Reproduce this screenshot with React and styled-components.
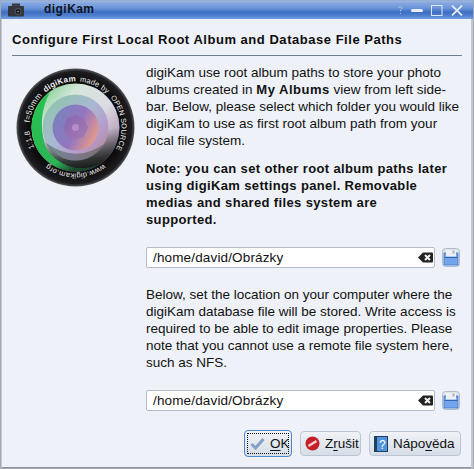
import React from "react";
import styled, { createGlobalStyle } from "styled-components";

const Global = createGlobalStyle`
  html, body { margin: 0; padding: 0; background: #eef1f7; }
  body { font-family: "Liberation Sans", Arial, sans-serif; }
`;

const Win = styled.div`
  width: 474px;
  height: 469px;
  box-sizing: border-box;
  display: flex;
  flex-direction: column;
  background: #eef1f7;
  border: solid #a4a9b1;
  border-width: 0 1px 1px 1px;
  box-shadow: inset 1px 0 0 #c4c8cf, inset -2px 0 0 #c4c8cf, inset 0 -1px 0 #8f949c;
  overflow: hidden;
`;

const TitleBar = styled.div`
  height: 19px;
  flex: none;
  display: flex;
  align-items: center;
  padding: 0 11px 0 8px;
  margin: 0 -1px;
  background: linear-gradient(#8ea6cc 0, #9db6de 1px, #86a8df 3px, #6b95d9 8px, #3f6fc4 12px, #4a7acb 15px, #6c98dd 18px);
`;

const AppIcon = styled.svg`
  width: 16px;
  height: 14px;
  flex: none;
`;

const WinTitle = styled.div`
  margin-left: 20px;
  font-size: 12px;
  font-weight: bold;
  letter-spacing: 0.45px;
  color: #10151f;
  flex: 1;
  position: relative;
  top: -1px;
`;

const Controls = styled.div`
  display: flex;
  align-items: center;
  gap: 8px;
  position: relative;
  top: 1px;
`;

const Heading = styled.h1`
  margin: 12px 11px 0 11px;
  padding: 0 0 7px 0;
  font-size: 13px;
  line-height: 17px;
  font-weight: bold;
  letter-spacing: 0.53px;
  color: #0d0d0d;
  border-bottom: 1px solid #6d7f90;
`;

const Body = styled.div`
  flex: 1;
  display: flex;
  padding: 8px 12px 0 13px;
`;

const LensColumn = styled.div`
  width: 132px;
  flex: none;
  padding: 4px 0 0 2px;
  box-sizing: border-box;
`;

const Main = styled.div`
  flex: 1;
  min-width: 0;
  display: flex;
  flex-direction: column;
`;

const Para = styled.p`
  margin: ${(p) => p.$top}px 0 0 0;
  font-size: 13.5px;
  line-height: 17px;
  color: #111;
  white-space: nowrap;
`;

const NoteText = styled(Para)`
  font-size: 13px;
  font-weight: bold;
  letter-spacing: 0.36px;
`;

const Strong = styled.b`
  font-size: 13px;
  letter-spacing: 0.5px;
`;

const PathRow = styled.div`
  margin-top: 19px;
  display: flex;
  align-items: center;
  gap: 7px;
`;

const PathBox = styled.div`
  width: 289px;
  height: 21px;
  box-sizing: border-box;
  display: flex;
  align-items: center;
  justify-content: space-between;
  padding: 0 1px 0 6px;
  background: #fff;
  border: 1px solid #b4bcc8;
  border-radius: 2px;
  font-size: 13.5px;
  letter-spacing: 0.15px;
  color: #111;
`;

const Buttons = styled.div`
  margin-top: 20px;
  display: flex;
  justify-content: flex-end;
  gap: 8px;
`;

const Btn = styled.div`
  width: ${(p) => p.$w}px;
  height: ${(p) => (p.$focus ? 27 : 25)}px;
  margin-top: ${(p) => (p.$focus ? -1 : 0)}px;
  padding-left: ${(p) => p.$pad}px;
  box-sizing: border-box;
  display: flex;
  align-items: center;
  gap: 5px;
  position: relative;
  border: 1px solid ${(p) => (p.$focus ? "#4f86d0" : "#bcc6d2")};
  border-radius: 4px;
  background: linear-gradient(#f0f3f7, #d5dde6);
  font-size: 13.5px;
  color: #111;
`;

const FocusRing = styled.span`
  position: absolute;
  inset: 2px;
  border: 1px dotted #111;
  pointer-events: none;
`;

const Key = styled.span`
  text-decoration: underline;
  text-underline-offset: 2px;
`;

// ring labels sit on one clockwise circle that starts at -130deg
const RING_R = 46;
const ringOffset = (deg) => `${((deg + 130) / 360) * 100}%`;
const ringPoint = (deg) => {
  const a = (deg * Math.PI) / 180;
  return `${59.5 + RING_R * Math.sin(a)} ${59.5 - RING_R * Math.cos(a)}`;
};
const ringPath = `M${ringPoint(-130)} A${RING_R} ${RING_R} 0 0 1 ${ringPoint(50)} A${RING_R} ${RING_R} 0 0 1 ${ringPoint(-130)}`;

const RingLabel = ({ deg, size = 8, bold, children }) => (
  <text fontSize={size} fontWeight={bold ? "bold" : "normal"} textAnchor="middle">
    <textPath href="#ring" startOffset={ringOffset(deg)}>{children}</textPath>
  </text>
);

const Lens = () => (
  <svg width="120" height="120" viewBox="0 0 120 120">
    <defs>
      <radialGradient id="rim" cx="50%" cy="50%" r="50%">
        <stop offset="0.8" stopColor="#0d0d0f" />
        <stop offset="0.95" stopColor="#1d1d20" />
        <stop offset="1" stopColor="#55585c" />
      </radialGradient>
      <linearGradient id="outer" x1="0.1" y1="0.1" x2="0.9" y2="0.85">
        <stop offset="0" stopColor="#7fd08f" />
        <stop offset="0.25" stopColor="#d6e6da" />
        <stop offset="0.6" stopColor="#dcdce4" />
        <stop offset="1" stopColor="#a98aa8" />
      </linearGradient>
      <linearGradient id="mid" x1="0.1" y1="0.1" x2="0.9" y2="0.9">
        <stop offset="0" stopColor="#8fc4ae" />
        <stop offset="0.45" stopColor="#aab8d2" />
        <stop offset="0.75" stopColor="#b69ccc" />
        <stop offset="1" stopColor="#b48a9c" />
      </linearGradient>
      <linearGradient id="inner" x1="0" y1="0.2" x2="1" y2="0.7">
        <stop offset="0" stopColor="#7683bc" />
        <stop offset="0.55" stopColor="#9476c0" />
        <stop offset="1" stopColor="#eb9c84" />
      </linearGradient>
      <linearGradient id="core" x1="0" y1="0" x2="1" y2="1">
        <stop offset="0" stopColor="#8468b0" />
        <stop offset="1" stopColor="#a878b4" />
      </linearGradient>
      <linearGradient id="shade" x1="0.55" y1="0.55" x2="0.6" y2="1">
        <stop offset="0" stopColor="#16201a" stopOpacity="0" />
        <stop offset="0.7" stopColor="#16201a" stopOpacity="0.85" />
        <stop offset="1" stopColor="#111" stopOpacity="1" />
      </linearGradient>
      <linearGradient id="greenSide" x1="0" y1="0.3" x2="0.6" y2="1">
        <stop offset="0" stopColor="#26c050" />
        <stop offset="0.75" stopColor="#2cb458" />
        <stop offset="1" stopColor="#1c4a2c" />
      </linearGradient>
      <path id="ring" d={ringPath} />
    </defs>
    <circle cx="59.5" cy="59.5" r="59" fill="url(#rim)" />
    <circle cx="59.5" cy="59.5" r="44" fill="url(#outer)" />
    <circle cx="59.5" cy="59.5" r="44" fill="url(#shade)" />
    <path d="M15.5 60 A44 44 0 0 0 60 103.5 A46 46 0 0 0 82 97 A42 42 0 0 1 30 80 Q20 50 34 24 A44 44 0 0 0 15.5 60Z" fill="url(#greenSide)" />
    <circle cx="59.5" cy="59.5" r="33" fill="url(#mid)" />
    <path d="M30 75 A33 33 0 0 0 88 76 Q60 96 30 75Z" fill="#33503f" opacity="0.45" />
    <circle cx="59.5" cy="59.5" r="23" fill="url(#inner)" />
    <polygon points="59.5,47 68,50.5 72,59.5 68,68.5 59.5,72 51,68.5 47,59.5 51,50.5" fill="url(#core)" />
    <circle cx="59.5" cy="59.5" r="3.5" fill="#b58cc4" />
    <g fill="#ececec" fontFamily="'Liberation Sans', sans-serif" letterSpacing="0.2">
      <RingLabel deg={-105} size={7.5}>1:1.8</RingLabel>
      <RingLabel deg={-65}>f=50mm</RingLabel>
      <RingLabel deg={-20} bold>digiKam</RingLabel>
      <RingLabel deg={24} size={7.5}>made by</RingLabel>
      <RingLabel deg={84} size={7.2}>OPEN SOURCE</RingLabel>
      <RingLabel deg={180} size={7.5}>www.digikam.org</RingLabel>
    </g>
  </svg>
);

const SaveIcon = () => (
  <svg width="18" height="19" viewBox="0 0 18 19">
    <rect x="0.5" y="0.5" width="17" height="18" rx="3" fill="#dfe4ec" stroke="#b0bccc" />
    <rect x="2" y="5" width="14" height="12" fill="#74a4ea" stroke="#3f78cc" strokeWidth="0.8" />
    <rect x="4" y="2" width="10" height="6.5" fill="#eef0f5" />
    <rect x="2.5" y="9" width="13" height="1" fill="#2f66bc" />
    <rect x="10.5" y="2.5" width="2" height="3" fill="#a6afbc" />
  </svg>
);

const ClearIcon = () => (
  <svg width="15" height="11" viewBox="0 0 15 11">
    <path d="M0 5.5 L5 0.5 H14 Q15 0.5 15 1.5 V9.5 Q15 10.5 14 10.5 H5Z" fill="#222" />
    <path d="M7 3 L12 8 M12 3 L7 8" stroke="#f0f0f0" strokeWidth="2" />
  </svg>
);

const PathField = () => (
  <PathRow>
    <PathBox>
      /home/david/Obrázky
      <ClearIcon />
    </PathBox>
    <SaveIcon />
  </PathRow>
);

export default function App() {
  return (
    <>
      <Global />
      <Win>
        <TitleBar>
          <AppIcon viewBox="0 0 16 14">
            <rect x="0" y="3" width="16" height="10.5" rx="1" fill="#33363c" />
            <rect x="4" y="0.5" width="8" height="3" fill="#3a3d44" />
            <circle cx="10" cy="8.5" r="3" fill="#15171b" stroke="#5b5f66" />
            <circle cx="10" cy="8.5" r="0.8" fill="#aab0ba" />
          </AppIcon>
          <WinTitle>digiKam</WinTitle>
          <Controls>
            <svg width="5" height="9" viewBox="0 0 5 9">
              <path d="M0.5 1.5 Q2.5 0 4 1.5 Q4 3.5 2.5 4 V5.5 M2.5 7 V8" stroke="#b8cbe8" fill="none" strokeWidth="0.8" />
            </svg>
            <svg width="12" height="3" viewBox="0 0 12 3">
              <rect width="12" height="3" rx="1.5" fill="#e8eef8" />
            </svg>
            <svg width="12" height="11" viewBox="0 0 12 11">
              <rect x="0.5" y="0.5" width="10.5" height="10" fill="none" stroke="#dde6f4" strokeWidth="1" />
            </svg>
            <svg width="12" height="11" viewBox="0 0 12 11">
              <path d="M1 0.5 L11 10.5 M11 0.5 L1 10.5" stroke="#e0e8f5" strokeWidth="1.8" />
            </svg>
          </Controls>
        </TitleBar>
        <Heading>Configure First Local Root Album and Database File Paths</Heading>
        <Body>
          <LensColumn>
            <Lens />
          </LensColumn>
          <Main>
            <Para $top={0}>
              digiKam use root album paths to store your photo<br />
              albums created in <Strong>My Albums</Strong> view from left side-<br />
              bar. Below, please select which folder you would like<br />
              digiKam to use as first root album path from your<br />
              local file system.
            </Para>
            <NoteText $top={11}>
              Note: you can set other root album paths later<br />
              using digiKam settings panel. Removable<br />
              medias and shared files system are<br />
              supported.
            </NoteText>
            <PathField />
            <Para $top={18}>
              Below, set the location on your computer where the<br />
              digiKam database file will be stored. Write access is<br />
              required to be able to edit image properties. Please<br />
              note that you cannot use a remote file system here,<br />
              such as NFS.
            </Para>
            <PathField />
            <Buttons>
              <Btn $focus $w={48} $pad={5}>
                <FocusRing />
                <svg width="15" height="13" viewBox="0 0 15 13">
                  <path d="M1.5 7 L5.5 11 L13.5 2" stroke="#84a0c4" strokeWidth="3" fill="none" />
                </svg>
                <span><Key>O</Key>K</span>
              </Btn>
              <Btn $w={61} $pad={4}>
                <svg width="15" height="15" viewBox="0 0 15 15">
                  <circle cx="7.5" cy="7.5" r="7" fill="#c4202a" />
                  <path d="M3.5 10 L11.5 5" stroke="#f4d0d0" strokeWidth="2.5" />
                </svg>
                <span>Z<Key>r</Key>ušit</span>
              </Btn>
              <Btn $w={92} $pad={4}>
                <svg width="14" height="16" viewBox="0 0 14 16">
                  <rect width="14" height="16" fill="#1f3f5e" />
                  <rect x="3" y="1" width="10" height="14" fill="#4f94dc" />
                  <text x="5" y="13" fontSize="12" fontFamily="Liberation Sans" fill="#fff">?</text>
                </svg>
                <span>Nápo<Key>v</Key>ěda</span>
              </Btn>
            </Buttons>
          </Main>
        </Body>
      </Win>
    </>
  );
}
